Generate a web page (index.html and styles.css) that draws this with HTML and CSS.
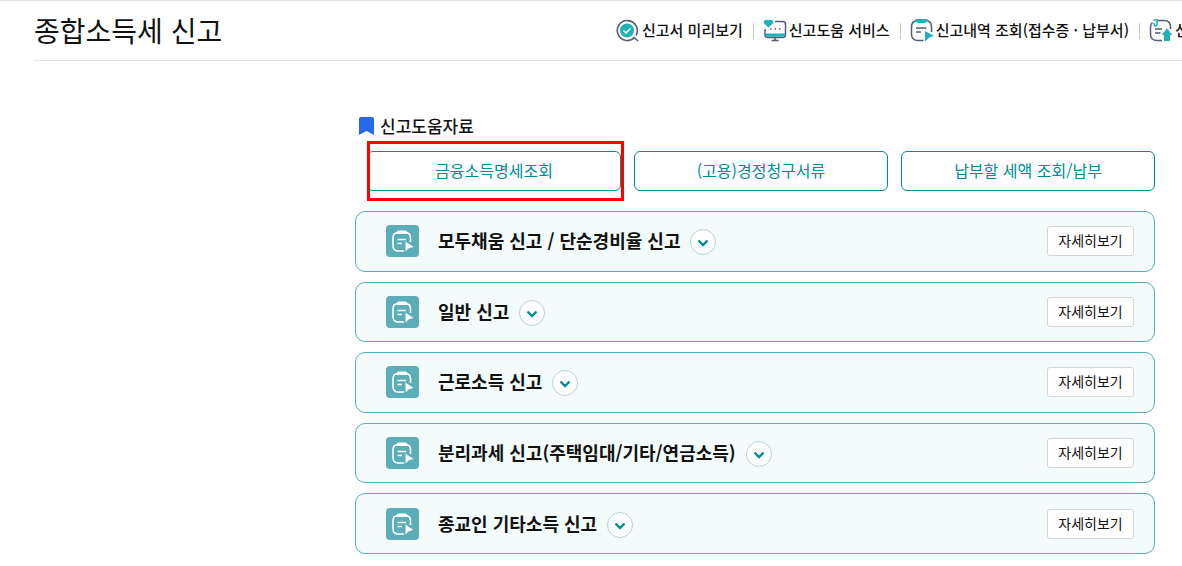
FILE: index.html
```
<!DOCTYPE html>
<html lang="ko">
<head>
<meta charset="utf-8">
<title>종합소득세 신고</title>
<link rel="stylesheet" href="styles.css">
</head>
<body>
<svg class="defs" aria-hidden="true">
  <symbol id="doc" viewBox="0 0 33 32">
    <path d="M18 26H12.500Q7 26 7 20.500V13Q7 7.500 12 7.500H19.500Q24.500 7.500 24.500 13V17" fill="none" stroke="#fff" stroke-width="1.600"/>
    <path d="M10 9Q10.500 5.500 13 5.500H19Q21.500 5.500 22 9Z" fill="#fff"/>
    <path d="M11.500 14.500H20M11.500 18.500H16" stroke="#fff" stroke-width="1.500"/>
    <path d="M19.500 16.500L27.500 22L22.800 23.200L19.500 26.500Z" fill="#fff"/>
  </symbol>
  <symbol id="chevron" viewBox="0 0 24 24">
    <path d="M7.500 10.500L12 15L16.500 10.500" fill="none" stroke="#008b99" stroke-width="2.400"/>
  </symbol>
</svg>
<header class="header">
  <h1 class="title">종합소득세 신고</h1>
  <nav class="nav">
    <a class="nav-link" href="#preview">
      <svg class="nav-icon" viewBox="0 0 24 24" aria-hidden="true"><path d="M18.500 18.500A10 10 0 1 1 20 16.500M17.500 18L22 22" fill="none" stroke="#575b72" stroke-width="1.600"/><circle cx="11" cy="11.500" r="7" fill="#1fb1b8"/><path d="M7.500 11.500L10 14L14.500 9.500" fill="none" stroke="#fff" stroke-width="1.500"/></svg>
      <span class="nav-text">신고서 미리보기</span>
    </a>
    <a class="nav-link" href="#service">
      <svg class="nav-icon" viewBox="0 0 24 24" aria-hidden="true"><path d="M12 2.500H19.500Q22.500 2.500 22.500 5.500V15.500Q22.500 18.500 19.500 18.500H5Q2 18.500 2 15.500V10M12 18V21.500M8.500 21.500H15.500" fill="none" stroke="#575b72" stroke-width="1.500"/><path d="M2.500 14.500H22V15.500Q22 17.800 19.500 17.800H5Q2.500 17.800 2.500 15.500Z" fill="#1fb1b8"/><path d="M5.500 8.500L1.200 4.500C-.5 2 3-.8 5.500 1.500C8-.8 11.500 2 9.800 4.500Z" fill="#1fb1b8"/><path d="M7 10H8.500M11.500 10H13M16 10H17.500" stroke="#575b72" stroke-width="1.500"/></svg>
      <span class="nav-text">신고도움 서비스</span>
    </a>
    <a class="nav-link" href="#history">
      <svg class="nav-icon" viewBox="0 0 24 24" aria-hidden="true"><path d="M13.500 21.500H8Q1.500 21.500 1.500 15V8Q1.500 1.500 8 1.500H15Q21.500 1.500 21.500 8V13" fill="none" stroke="#575b72" stroke-width="1.500"/><path d="M5.500 0H17.500Q17 4 14 4H9Q6 4 5.500 0Z" fill="#1fb1b8"/><path d="M6 9H16.500M6 13H11" stroke="#575b72" stroke-width="1.500"/><path d="M15 12L24 17L19.500 18.500L15 22.500Z" fill="#1fb1b8"/></svg>
      <span class="nav-text">신고내역 조회(접수증 · 납부서)</span>
    </a>
    <a class="nav-link" href="#attach">
      <svg class="nav-icon" viewBox="0 0 24 24" aria-hidden="true"><path d="M3.500 3.500Q1.500 5 1.500 8V15Q1.500 21.500 8 21.500H13M8 1.500H15Q21.500 1.500 21.500 8V10" fill="none" stroke="#575b72" stroke-width="1.500"/><path d="M4.500 1H8V5.500Q8 7 6.500 7Q5 7 5 5.500V4" fill="none" stroke="#1fb1b8" stroke-width="1.500"/><path d="M6 10H13M6 14H11.500" stroke="#575b72" stroke-width="1.500"/><path d="M18 9.500L23.500 16H21V22H15V16H12.500Z" fill="#1fb1b8"/></svg>
      <span class="nav-text">신</span>
    </a>
  </nav>
</header>
<main class="main">
  <h2 class="section-title">
    <svg class="bookmark" viewBox="0 0 15 18" aria-hidden="true"><path d="M0 2Q0 0 2 0H13Q15 0 15 2V18L7.500 14L0 18Z" fill="#246beb"/></svg>
    <span>신고도움자료</span>
  </h2>
  <div class="actions">
    <div class="highlighted"><button class="action" type="button">금융소득명세조회</button></div>
    <button class="action" type="button">(고용)경정청구서류</button>
    <button class="action" type="button">납부할 세액 조회/납부</button>
  </div>
  <div class="cards">
    <section class="card">
      <svg class="card-icon" aria-hidden="true"><use href="#doc"/></svg>
      <h3 class="card-title">모두채움 신고 / 단순경비율 신고</h3>
      <button class="toggle" type="button" aria-label="펼치기"><svg class="chevron"><use href="#chevron"/></svg></button>
      <button class="detail" type="button">자세히보기</button>
    </section>
    <section class="card">
      <svg class="card-icon" aria-hidden="true"><use href="#doc"/></svg>
      <h3 class="card-title">일반 신고</h3>
      <button class="toggle" type="button" aria-label="펼치기"><svg class="chevron"><use href="#chevron"/></svg></button>
      <button class="detail" type="button">자세히보기</button>
    </section>
    <section class="card">
      <svg class="card-icon" aria-hidden="true"><use href="#doc"/></svg>
      <h3 class="card-title">근로소득 신고</h3>
      <button class="toggle" type="button" aria-label="펼치기"><svg class="chevron"><use href="#chevron"/></svg></button>
      <button class="detail" type="button">자세히보기</button>
    </section>
    <section class="card">
      <svg class="card-icon" aria-hidden="true"><use href="#doc"/></svg>
      <h3 class="card-title">분리과세 신고(주택임대/기타/연금소득)</h3>
      <button class="toggle" type="button" aria-label="펼치기"><svg class="chevron"><use href="#chevron"/></svg></button>
      <button class="detail" type="button">자세히보기</button>
    </section>
    <section class="card">
      <svg class="card-icon" aria-hidden="true"><use href="#doc"/></svg>
      <h3 class="card-title">종교인 기타소득 신고</h3>
      <button class="toggle" type="button" aria-label="펼치기"><svg class="chevron"><use href="#chevron"/></svg></button>
      <button class="detail" type="button">자세히보기</button>
    </section>
  </div>
</main>
</body>
</html>
```
FILE: styles.css
```
* { box-sizing: border-box; }
body {
  margin: 0;
  background: #fff;
  color: #111;
  border-top: 1px solid #dfe0e5;
  font-family: "Noto Sans CJK KR", sans-serif;
  overflow-x: hidden;
}
button { font-family: inherit; padding: 0 0 2px; cursor: pointer; }
h1, h2, h3 { margin: 0; }
.defs { display: none; }
.header {
  display: flex;
  align-items: center;
  height: 60px;
  margin-left: 34px;
  border-bottom: 1px solid #e2e4e9;
}
.title { flex: 1; padding-bottom: 2px; font-size: 28px; font-weight: 400; line-height: 40px; white-space: nowrap; }
.nav { display: flex; align-items: center; flex: 0 0 566px; overflow: hidden; }
.nav-link {
  display: flex;
  align-items: center;
  flex: none;
  gap: 2px;
  color: #111;
  font-size: 15px;
  font-weight: 500;
  line-height: 24px;
  text-decoration: none;
  white-space: nowrap;
}
.nav-link + .nav-link::before {
  content: "";
  width: 1px;
  height: 16px;
  margin: 0 7px 0 10px;
  background: #c4c6cc;
}
.nav-text { padding-bottom: 2px; }
.nav-icon { width: 24px; height: 24px; }
.main { padding: 53px 27px 12px 355px; }
.section-title {
  display: flex;
  align-items: center;
  gap: 6px;
  padding-left: 4px;
  font-size: 17px;
  font-weight: 500;
  line-height: 24px;
}
.bookmark { width: 15px; height: 18px; }
.actions {
  display: grid;
  grid-template-columns: repeat(3, 1fr);
  gap: 13px;
  margin: 13px 0 20px 12px;
}
.action {
  width: 100%;
  height: 40px;
  border: 1px solid #008b99;
  border-radius: 6px;
  background: #fff;
  color: #008b99;
  font-size: 16px;
  line-height: 24px;
}
.highlighted { position: relative; }
.highlighted::after {
  content: "";
  position: absolute;
  inset: -10px -3px -10px 0;
  border: 3px solid #f00;
  pointer-events: none;
}
.cards { display: grid; grid-auto-rows: 1fr; gap: 10px; min-height: 343px; }
.card {
  display: flex;
  align-items: center;
  padding: 0 20px 0 30px;
  border: 1px solid #56adb6;
  border-radius: 10px;
  background: #f3fbfb;
}
.card-icon { width: 33px; height: 32px; border-radius: 4px; background: #5badb7; }
.card-title { margin: 0 10px 0 19px; padding-bottom: 2px; font-size: 18px; font-weight: 700; line-height: 28px; }
.toggle {
  display: grid;
  place-items: center;
  width: 26px;
  height: 26px;
  margin-top: 2px;
  padding: 0;
  border: 1px solid #b5d3d9;
  border-radius: 50%;
  background: #fff;
}
.chevron { width: 24px; height: 24px; }
.detail {
  width: 87px;
  height: 30px;
  margin-left: auto;
  border: 1px solid #d5d6da;
  border-radius: 3px;
  background: #fff;
  color: #111;
  font-size: 14px;
  line-height: 20px;
}
```
